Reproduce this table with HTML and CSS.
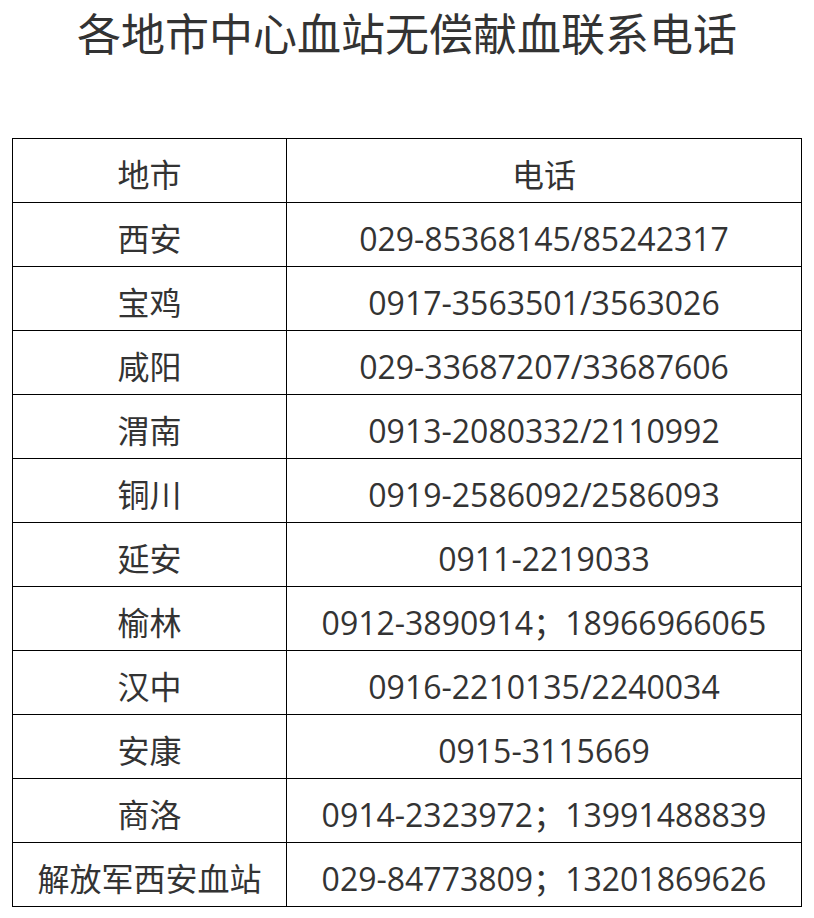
FILE: index.html
```html
<!DOCTYPE html>
<html lang="zh-CN">
<head>
<meta charset="utf-8">
<title>各地市中心血站无偿献血联系电话</title>
<link rel="stylesheet" href="styles.css">
</head>
<body>
<div class="page">
  <h1 class="title">各地市中心血站无偿献血联系电话</h1>
  <table class="contacts">
    <colgroup><col class="c-city"><col class="c-phone"></colgroup>
    <tr><td>地市</td><td>电话</td></tr>
    <tr><td>西安</td><td>029-85368145/85242317</td></tr>
    <tr><td>宝鸡</td><td>0917-3563501/3563026</td></tr>
    <tr><td>咸阳</td><td>029-33687207/33687606</td></tr>
    <tr><td>渭南</td><td>0913-2080332/2110992</td></tr>
    <tr><td>铜川</td><td>0919-2586092/2586093</td></tr>
    <tr><td>延安</td><td>0911-2219033</td></tr>
    <tr><td>榆林</td><td>0912-3890914；18966966065</td></tr>
    <tr><td>汉中</td><td>0916-2210135/2240034</td></tr>
    <tr><td>安康</td><td>0915-3115669</td></tr>
    <tr><td>商洛</td><td>0914-2323972；13991488839</td></tr>
    <tr><td>解放军西安血站</td><td>029-84773809；13201869626</td></tr>
  </table>
</div>
</body>
</html>
```
FILE: styles.css
```css
html, body {
  margin: 0;
  padding: 0;
  background: #fff;
}
.page {
  padding: 0 0 0 12px;
  color: #333;
  font-family: "Open Sans", "Noto Sans CJK SC", sans-serif;
}
.title {
  margin: 0;
  padding-top: 4px;
  height: 138px;
  box-sizing: border-box;
  text-align: center;
  font-size: 44px;
  font-weight: normal;
  line-height: 60px;
  padding-right: 12px;
}
.contacts {
  border-collapse: collapse;
  width: 789px;
  table-layout: fixed;
}
.c-city { width: 274px; }
.c-phone { width: 515px; }
.contacts td {
  border: 1px solid #000;
  height: 64px;
  padding: 8px 0 0 0;
  box-sizing: border-box;
  text-align: center;
  vertical-align: middle;
  font-size: 32px;
  line-height: 40px;
  white-space: nowrap;
}
```
